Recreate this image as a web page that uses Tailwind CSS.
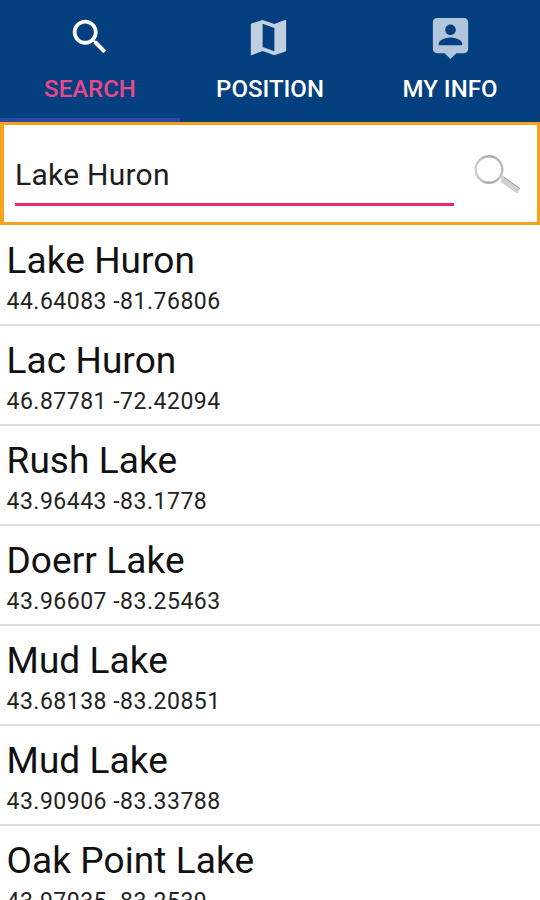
<!DOCTYPE html>
<html lang="en">
<head>
    <meta charset="UTF-8">
    <meta name="viewport" content="width=device-width, initial-scale=1.0">
    <title>Lake Search</title>
    <script src="https://cdn.jsdelivr.net/npm/@tailwindcss/browser@4"></script>
    <style>
        body {
            font-family: Roboto, 'Liberation Sans', sans-serif;
        }
    </style>
</head>
<body class="bg-white text-[#111111] h-[900px] overflow-hidden">
    <!-- Tab bar -->
    <nav class="grid grid-cols-3 h-[122px] bg-[#04407f] text-white text-[24px] leading-[28px] font-medium">
        <button class="flex flex-col items-center pt-[14px] border-b-4 border-[#2b4ba6] text-[#e8488b]">
            <svg class="size-[46px] text-white" viewBox="0 0 24 24" fill="currentColor">
                <path d="M15.5 14h-.79l-.28-.27C15.41 12.59 16 11.11 16 9.5 16 5.91 13.09 3 9.5 3S3 5.91 3 9.5 5.91 16 9.5 16c1.61 0 3.09-.59 4.23-1.57l.27.28v.79l5 4.99L20.49 19l-4.99-5zm-6 0C7.01 14 5 11.99 5 9.5S7.01 5 9.5 5 14 7.01 14 9.5 11.99 14 9.5 14z"/>
            </svg>
            <span class="mt-[15px]">SEARCH</span>
        </button>
        <button class="flex flex-col items-center pt-[14px]">
            <svg class="size-[47px] mr-[3px] text-[#c0d0e1]" viewBox="0 0 24 24" fill="currentColor">
                <path d="M20.5 3l-.16.03L15 5.1 9 3 3.36 4.9c-.21.07-.36.25-.36.48V20.5c0 .28.22.5.5.5l.16-.03L9 18.9l6 2.1 5.64-1.9c.21-.07.36-.25.36-.48V3.5c0-.28-.22-.5-.5-.5zM15 19l-6-2.11V5l6 2.11V19z"/>
            </svg>
            <span class="mt-[14px]">POSITION</span>
        </button>
        <button class="flex flex-col items-center pt-[14px]">
            <svg class="size-[47px] text-[#b1c5dc]" viewBox="0 0 24 24" fill="currentColor">
                <path d="M19 2H5c-1.11 0-2 .9-2 2v14c0 1.1.89 2 2 2h4l3 3 3-3h4c1.1 0 2-.9 2-2V4c0-1.1-.9-2-2-2zm-7 3.3c1.49 0 2.7 1.21 2.7 2.7 0 1.49-1.21 2.7-2.7 2.7-1.49 0-2.7-1.21-2.7-2.7 0-1.49 1.21-2.7 2.7-2.7zM18 16H6v-.9c0-2 4-3.1 6-3.1s6 1.1 6 3.1v.9z"/>
            </svg>
            <span class="mt-[14px]">MY INFO</span>
        </button>
    </nav>

    <!-- Search box -->
    <section class="flex h-[103px] border-[3px] border-l-4 border-[#f9a11b] pl-[11px]">
        <div class="w-[439px] h-[81px] pt-[32px] border-b-[3px] border-[#ee2472] text-[30px] leading-[36px] tracking-[0.25px] text-[#1d1d1d]">Lake Huron</div>
        <svg class="w-[52px] h-[46px] ml-[17px] mt-[26px]" viewBox="0 0 52 46">
            <defs>
                <linearGradient id="handle" x1="0" y1="1" x2="1" y2="0">
                    <stop offset="0" stop-color="#d4d4d4"/>
                    <stop offset="0.55" stop-color="#d0d0d0"/>
                    <stop offset="1" stop-color="#999999"/>
                </linearGradient>
                <linearGradient id="rim" x1="0" y1="0" x2="1" y2="0">
                    <stop offset="0" stop-color="#cfcfcf"/>
                    <stop offset="0.5" stop-color="#aaaaaa"/>
                    <stop offset="1" stop-color="#bcbcbc"/>
                </linearGradient>
            </defs>
            <circle cx="18" cy="18.5" r="13.3" fill="none" stroke="url(#rim)" stroke-width="2.4"/>
            <path d="M28 27l4-1.5" stroke="#cccccc" stroke-width="2"/>
            <path d="M32.5 25.5L49.5 37.5 46 42.5 29 30.5z" fill="url(#handle)"/>
            <path d="M32.5 26L49 37.5" stroke="#a2a2a2" stroke-width="1"/>
        </svg>
    </section>

    <!-- Results -->
    <ul class="pt-[0.6px] [&>li]:h-[100.1px] [&>li]:pl-[6.5px] [&>li]:pt-[13px] [&>li]:border-b-2 [&>li]:border-[#dedede] [&_h2]:text-[37px] [&_h2]:leading-[44px] [&_h2]:tracking-[0.08px] [&_p]:text-[23px] [&_p]:leading-[28px] [&_p]:mt-[5px] [&_p]:tracking-[0.5px] [&_p]:text-[#222222]">
        <li>
            <h2>Lake Huron</h2>
            <p>44.64083 -81.76806</p>
        </li>
        <li>
            <h2>Lac Huron</h2>
            <p>46.87781 -72.42094</p>
        </li>
        <li>
            <h2>Rush Lake</h2>
            <p>43.96443 -83.1778</p>
        </li>
        <li>
            <h2>Doerr Lake</h2>
            <p>43.96607 -83.25463</p>
        </li>
        <li>
            <h2>Mud Lake</h2>
            <p>43.68138 -83.20851</p>
        </li>
        <li>
            <h2>Mud Lake</h2>
            <p>43.90906 -83.33788</p>
        </li>
        <li>
            <h2>Oak Point Lake</h2>
            <p>43.97035 -83.2539</p>
        </li>
    </ul>
</body>
</html>
